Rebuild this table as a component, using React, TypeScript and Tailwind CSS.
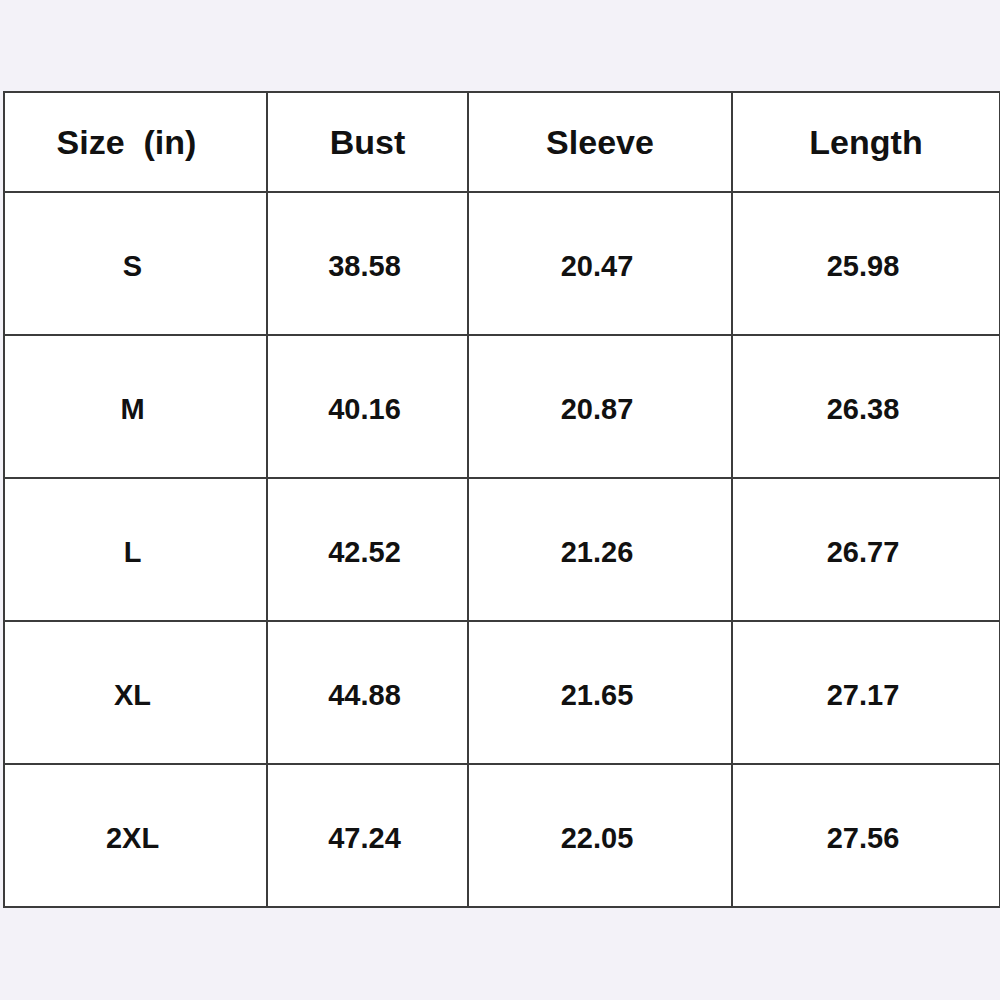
import React from 'react';

const rows = [
  ['S', '38.58', '20.47', '25.98'],
  ['M', '40.16', '20.87', '26.38'],
  ['L', '42.52', '21.26', '26.77'],
  ['XL', '44.88', '21.65', '27.17'],
  ['2XL', '47.24', '22.05', '27.56'],
];

const headers = ['Size  (in)', 'Bust', 'Sleeve', 'Length'];

export default function App() {
  return (
    <div className="min-h-screen w-[1000px] bg-[#f3f2f8] pl-[3px] pt-[91px] font-['Liberation_Sans',Arial,sans-serif]">
      <table className="w-[996px] table-fixed border-collapse bg-white text-[#111]">
        <colgroup>
          <col className="w-[263px]" />
          <col className="w-[201px]" />
          <col className="w-[264px]" />
          <col className="w-[268px]" />
        </colgroup>
        <thead>
          <tr className="h-[100px]">
            {headers.map((h, i) => (
              <th
                key={h}
                className={`border-2 border-[#3c3c3c] whitespace-pre text-[34px] font-bold ${i === 0 ? 'pr-[18px]' : ''}`}
              >
                {h}
              </th>
            ))}
          </tr>
        </thead>
        <tbody>
          {rows.map((r) => (
            <tr key={r[0]} className="h-[143px]">
              {r.map((c, i) => (
                <td
                  key={i}
                  className="border-2 border-[#3c3c3c] pt-[6px] pr-[6px] text-center text-[29px] font-bold"
                >
                  {c}
                </td>
              ))}
            </tr>
          ))}
        </tbody>
      </table>
    </div>
  );
}
